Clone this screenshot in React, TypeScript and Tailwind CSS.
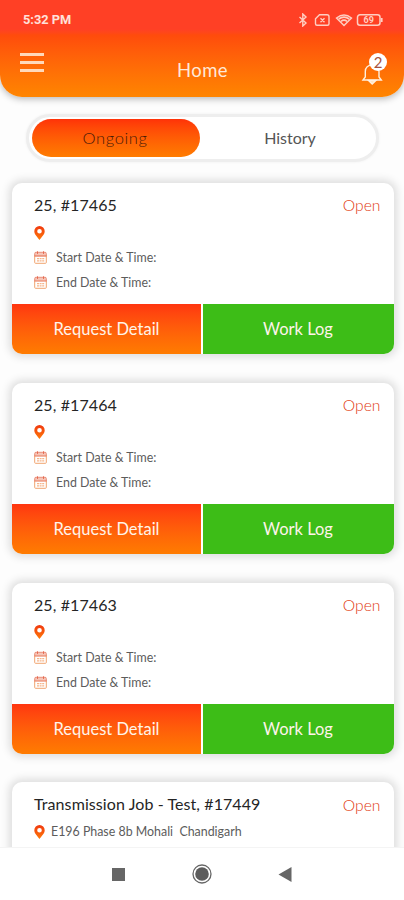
import React from "react";

type Job = { title: string; address?: string };

const jobs: Job[] = [
  { title: "25, #17465" },
  { title: "25, #17464" },
  { title: "25, #17463" },
  { title: "Transmission Job - Test, #17449", address: "E196 Phase 8b Mohali\u00a0 Chandigarh" },
];

function Pin() {
  return (
    <svg width="11" height="14" viewBox="0 0 11 14" className="block shrink-0">
      <defs>
        <linearGradient id="pin" x1="0" y1="0" x2="0" y2="1">
          <stop offset="0" stopColor="#f0380f" />
          <stop offset="1" stopColor="#ff7a08" />
        </linearGradient>
      </defs>
      <path fillRule="evenodd" fill="url(#pin)" d="M5.500 0A5.200 5.200 0 0 0 .3 5.200C.3 8.600 3.600 11 5.500 14 7.400 11 10.700 8.600 10.700 5.200A5.200 5.200 0 0 0 5.500 0ZM5.500 2.900a2.300 2.300 0 1 1 0 4.600 2.300 2.300 0 0 1 0-4.600Z" />
    </svg>
  );
}

function Calendar() {
  return (
    <svg width="13" height="13" viewBox="0 0 13 13" className="block shrink-0" fill="none">
      <path d="M1 1.800h11v2.900H1z" fill="#f6c4b6" />
      <path d="M.7 5V2.500Q.7 1.300 1.900 1.300h9.200q1.200 0 1.200 1.200V5" stroke="#e88a74" />
      <path d="M.7 5v6.500q0 .8.800.8h10q.8 0 .8-.8V5" stroke="#f0a46f" />
      <path d="M3.500.3v2.600M9.500.3v2.600" stroke="#e66a50" />
      <path d="M.5 5h12" stroke="#e5704f" strokeWidth="1.200" />
      <path d="M3 7.700h7.200M3 9.900h7.200" stroke="#f6b58a" strokeWidth="1.200" strokeDasharray="2 .6" />
    </svg>
  );
}

function DateRow({ label }: { label: string }) {
  return (
    <div className="flex h-[25px] items-center gap-[9px] text-[12.400px] text-[#5c5c5c]">
      <Calendar />
      <span className="pt-[2px] whitespace-nowrap">{label}</span>
    </div>
  );
}

function JobCard({ job }: { job: Job }) {
  return (
    <article className="flex h-[171px] shrink-0 flex-col overflow-hidden rounded-[10px] bg-white shadow-[0_0_8px_3px_rgba(0,0,0,0.13)]">
      <div className="h-[121px] pt-[10px] pr-[13px] pl-[22px]">
        <div className="flex h-6 items-center justify-between">
          <h2 className="text-[16px] tracking-[0.090px] text-[#252525]">{job.title}</h2>
          <span className="pt-[2px] text-[15.700px] font-light text-[#e23a12]">Open</span>
        </div>
        <div className="flex h-[28px] items-center gap-[6px] pt-[3px] text-[12.400px] text-[#5c5c5c]">
          <Pin />
          <span className="whitespace-nowrap">{job.address}</span>
        </div>
        {!job.address && (
          <>
            <DateRow label="Start Date & Time:" />
            <DateRow label="End Date & Time:" />
          </>
        )}
      </div>
      {!job.address && (
        <div className="flex h-[50px] gap-[1.500px] text-[16.500px] text-[#fff4ea]">
          <button className="w-[189px] bg-linear-to-b from-[#ff3510] to-[#ff7c00] pt-px">Request Detail</button>
          <button className="flex-1 bg-[#3dbd17] pt-px">Work Log</button>
        </div>
      )}
    </article>
  );
}

function StatusIcons() {
  return (
    <svg width="86" height="14" viewBox="0 0 86 14" fill="none" stroke="#ffcec2" strokeWidth="1.200">
      <path d="M1.500 4l6.500 6-3.200 3V1L8 4l-6.500 6" strokeWidth="1.400" />
      <path d="M21.500 1.700h7.500q2 0 2 2v7q0 1.500-1.500 1.500h-10.500Q17.500 12.200 17.500 10.700v-5ZM22.500 5.200l4 4m0-4-4 4" strokeWidth="1.400" />
      <path d="M38.500 5q7.500-6 15 0l-7.500 7.500-7.500-7.500Z" strokeWidth="1.400" />
      <path d="M40.800 6q5.200-3.800 10.400 0M43 8.400q3-2.400 6 0" strokeWidth="1.700" />
      <rect x="59.500" y="1.800" width="22.500" height="10.400" rx="2.500" strokeWidth="1.500" />
      <path d="M83.700 5v4" strokeWidth="1.800" />
      <text x="70.700" y="10.200" textAnchor="middle" fontFamily="Roboto, sans-serif" fontSize="9" fontWeight="700" stroke="none" fill="#ffcec2">69</text>
    </svg>
  );
}

export default function App() {
  return (
    <div className="flex h-[900px] w-[404px] flex-col overflow-hidden bg-[#fdfdfd] font-['Lato','Open_Sans',sans-serif]">
      <header className="z-10 h-[97px] shrink-0 rounded-b-[22px] bg-linear-to-b from-[#ff4025] from-[30%] via-[#ff4b0c] via-[36%] to-[#ff8500] shadow-[0_2px_7px_rgba(0,0,0,0.28)]">
        <div className="flex h-10 items-center justify-between pr-[20px] pl-[23px]">
          <span className="font-['Roboto',sans-serif] text-[12.800px] font-bold text-[#ffe0da]">5:32 PM</span>
          <StatusIcons />
        </div>
        <div className="flex h-[57px] items-start justify-between pr-[16px] pl-[20px]">
          <div className="mt-[13px] flex w-[24px] flex-col gap-[5px]">
            <i className="h-[3px] bg-[#ffd9bb]" />
            <i className="h-[3px] bg-[#ffd9bb]" />
            <i className="h-[3px] bg-[#ffd9bb]" />
          </div>
          <h1 className="mt-[18px] w-[51px] text-[18.500px] leading-6 tracking-[0.400px] text-[#ffe9d9]">Home</h1>
          <div className="relative mt-[13px] h-[32px] w-[27px]">
            <svg width="22" height="22" viewBox="0 0 22 22" className="absolute top-[10px] left-0 block" fill="none" stroke="#fff0df" strokeWidth="1.400">
              <path d="M4.300 14V8.500C4.300 4.500 7 2 11.500 2s6.500 2.500 6.500 6.500V14l2.300 3H2l2.300-3Z" />
              <path d="M7.500 17.500 11.200 21l3.700-3.500Z" fill="#ffe0b8" />
            </svg>
            <span className="absolute top-0 left-[8px] flex size-[18px] items-center justify-center rounded-full bg-white text-[15px] leading-none text-[#a8523c]">2</span>
          </div>
        </div>
      </header>

      <main className="flex min-h-0 flex-1 flex-col overflow-hidden">
        <nav className="mt-[17px] ml-[26px] flex h-[48px] w-[353px] shrink-0 rounded-full border-[3px] border-[#eee] bg-white p-[2px] text-[16px] shadow-[0_0_3px_rgba(0,0,0,0.06)]">
          <button className="ml-px w-[168px] rounded-full bg-linear-to-b from-[#ff3208] to-[#ff7c00] pr-[2px] text-[16.500px] font-light tracking-[0.600px] text-[#4a1a08]">Ongoing</button>
          <button className="flex-1 pl-[6px] text-[#555]">History</button>
        </nav>
        <section className="mt-[21px] flex flex-col gap-[28.800px] pr-[10.500px] pl-[12px]">
          {jobs.map((job) => <JobCard key={job.title} job={job} />)}
        </section>
      </main>

      <footer className="z-10 flex h-[53px] shrink-0 items-center justify-between border-t border-[#f4f4f4] bg-white pr-[112px] pl-[112px]">
        <i className="size-[13px] bg-[#666]" />
        <svg width="20" height="20" viewBox="0 0 20 20">
          <circle cx="10" cy="10" r="9" fill="none" stroke="#666" strokeWidth="1.300" />
          <circle cx="10" cy="10" r="6.800" fill="#5c5c5c" />
        </svg>
        <svg width="14" height="15" viewBox="0 0 14 15"><path d="M13.500 0v15L.5 7.500Z" fill="#666" /></svg>
      </footer>
    </div>
  );
}
